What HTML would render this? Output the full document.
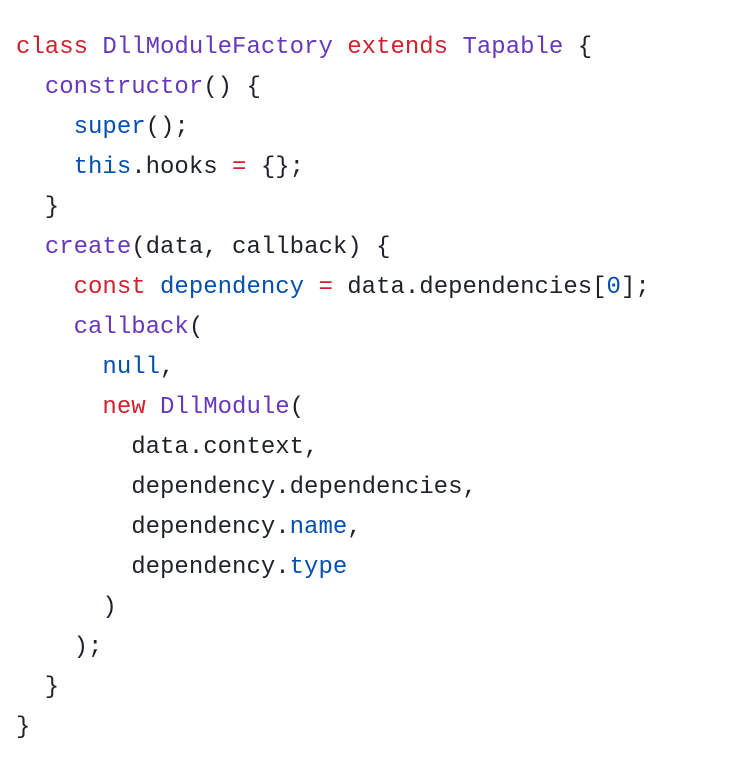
<!DOCTYPE html>
<html><head><style>
html,body{margin:0;padding:0;background:#fff;width:754px;height:766px;overflow:hidden}
pre{margin:0;padding:28px 0 0 16px;font-family:"Liberation Mono",monospace;font-size:24px;line-height:40px;color:#1f2328}
.k{color:#cf222e}.p{color:#6639ba}.b{color:#0550ae}
</style></head><body><pre><span class="k">class</span> <span class="p">DllModuleFactory</span> <span class="k">extends</span> <span class="p">Tapable</span> {
  <span class="p">constructor</span>() {
    <span class="b">super</span>();
    <span class="b">this</span>.hooks <span class="k">=</span> {};
  }
  <span class="p">create</span>(data, callback) {
    <span class="k">const</span> <span class="b">dependency</span> <span class="k">=</span> data.dependencies[<span class="b">0</span>];
    <span class="p">callback</span>(
      <span class="b">null</span>,
      <span class="k">new</span> <span class="p">DllModule</span>(
        data.context,
        dependency.dependencies,
        dependency.<span class="b">name</span>,
        dependency.<span class="b">type</span>
      )
    );
  }
}</pre></body></html>
